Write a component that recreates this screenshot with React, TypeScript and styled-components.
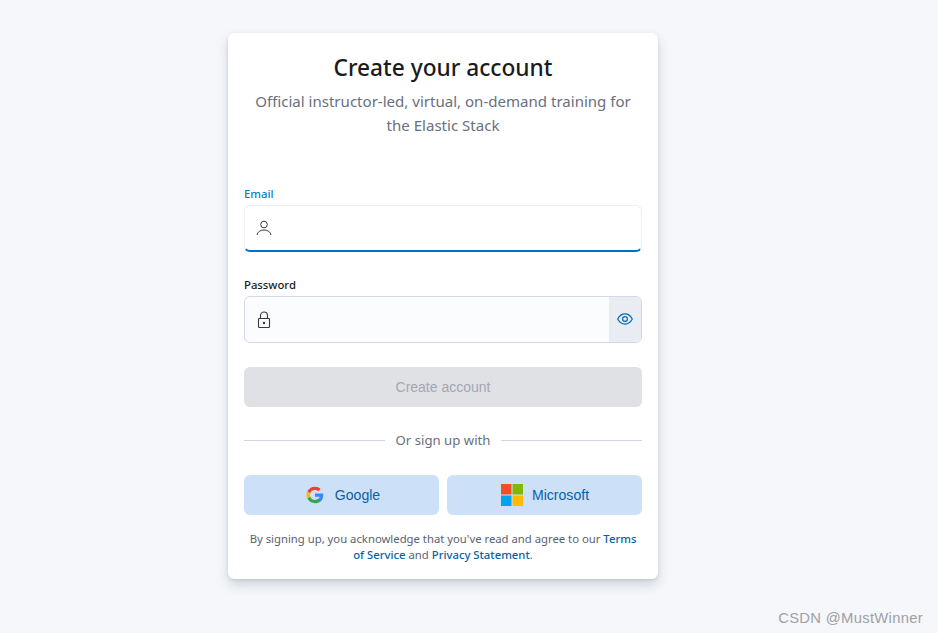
import React from "react";
import styled, { createGlobalStyle } from "styled-components";

const GlobalStyle = createGlobalStyle`
    html, body {
        margin: 0;
        padding: 0;
        height: 100%;
        background: #f5f7fa;
        font-family: "Noto Sans", "Open Sans", sans-serif;
    }
`;

const Page = styled.div`
    width: 938px;
    height: 633px;
    padding: 33px 0 0 228px;
    box-sizing: border-box;
    overflow: hidden;
`;

const Card = styled.div`
    width: 430px;
    height: 546px;
    box-sizing: border-box;
    padding: 16px;
    background: #ffffff;
    border-radius: 6px;
    box-shadow: 0 6px 12px rgba(65, 75, 100, 0.2), 0 1px 3px rgba(65, 75, 100, 0.14);
`;

const Title = styled.h1`
    margin: 3px 0 0;
    font-size: 22.7px;
    line-height: 32px;
    font-weight: 500;
    color: #1a1c21;
    text-align: center;
`;

const Subtitle = styled.p`
    margin: 5px 0 0;
    font-size: 15.05px;
    line-height: 24px;
    color: #69707d;
    text-align: center;
`;

const Field = styled.div<{ $top: number }>`
    margin-top: ${props => props.$top}px;
`;

const Label = styled.label<{ $active?: boolean }>`
    display: block;
    font-size: 11.3px;
    line-height: 16px;
    font-weight: 500;
    margin-bottom: 3px;
    color: ${props => props.$active ? "#0a7fc0" : "#1a1c21"};
`;

const InputWrap = styled.div<{ $active?: boolean }>`
    position: relative;
    display: flex;
    align-items: stretch;
    height: 47px;
    box-sizing: border-box;
    overflow: hidden;
    border-radius: 6px;
    border: 1px solid ${props => props.$active ? "#eeeef5" : "#d3d8e8"};
    background: ${props => props.$active ? "#ffffff" : "#fbfcfd"};
    ${props => props.$active ? "border-bottom: 2px solid #0071c2;" : ""}
`;

const IconSlot = styled.span`
    display: flex;
    align-items: center;
    justify-content: center;
    width: 38px;
    flex: none;
    color: #343741;
`;

const TextInput = styled.input`
    flex: 1;
    min-width: 0;
    border: 0;
    outline: 0;
    background: transparent;
`;

const EyeSlot = styled.span`
    display: flex;
    align-items: center;
    justify-content: center;
    width: 32px;
    padding-bottom: 2px;
    box-sizing: border-box;
    flex: none;
    background: #e9edf3;
    color: #006bb4;
`;

const SubmitButton = styled.button`
    display: block;
    width: 100%;
    height: 40px;
    margin-top: 24px;
    border: 0;
    border-radius: 6px;
    background: #e0e1e5;
    color: #a2a7b3;
    font-family: "Liberation Sans", Arial, sans-serif;
    font-size: 14px;
`;

const Divider = styled.div`
    display: flex;
    align-items: center;
    gap: 11px;
    margin-top: 22px;
    height: 22px;
    font-size: 13.2px;
    color: #69707d;

    &::before, &::after {
        content: "";
        flex: 1;
        height: 1px;
        background: #d0d5e6;
    }
`;

const SocialRow = styled.div`
    display: grid;
    grid-template-columns: 1fr 1fr;
    gap: 8px;
    margin-top: 24px;
`;

const SocialButton = styled.button<{ $gap: number; $inset: number }>`
    display: flex;
    align-items: center;
    justify-content: center;
    gap: ${props => props.$gap}px;
    height: 40px;
    padding: 0 0 0 ${props => props.$inset}px;
    border: 0;
    border-radius: 6px;
    background: #cce1f8;
    color: #0a5fa8;
    font-family: "Liberation Sans", Arial, sans-serif;
    font-size: 14.1px;
`;

const Terms = styled.p`
    margin: 16px 0 0;
    font-size: 11.3px;
    line-height: 16px;
    color: #5a6270;
    text-align: center;
`;

const TermsLink = styled.a`
    color: #0b5fa5;
    font-weight: 500;
    text-decoration: none;
`;

const Watermark = styled.div`
    position: absolute;
    right: 15px;
    top: 609px;
    font-family: "Liberation Sans", Arial, sans-serif;
    font-size: 14.800px;
    line-height: 18px;
    letter-spacing: 0.3px;
    color: #a0a0a3;
`;

const UserIcon = () => (
    <svg width="16" height="16" viewBox="0 0 16 16" fill="none" stroke="currentColor" strokeWidth="1">
        <circle cx="8" cy="4.500" r="3.300" />
        <path d="M1 15c.6-3.200 3.400-5 7-5s6.400 1.800 7 5" />
    </svg>
);

const LockIcon = () => (
    <svg width="14" height="18" viewBox="0 0 14 18" fill="none" stroke="currentColor" strokeWidth="1.100">
        <rect x="1.500" y="7.500" width="11" height="9" rx="0.8" />
        <path d="M3.500 7.500V4.500a3.500 3.500 0 0 1 7 0v3" />
        <circle cx="7" cy="12" r="1.200" fill="currentColor" stroke="none" />
    </svg>
);

const EyeIcon = () => (
    <svg width="16" height="16" viewBox="0 0 16 16" fill="none" stroke="currentColor" strokeWidth="1.200">
        <path d="M.7 8C2.500 4.600 5 2.900 8 2.900s5.500 1.700 7.300 5.100c-1.800 3.400-4.300 5.100-7.300 5.100S2.500 11.400.7 8z" />
        <circle cx="8" cy="8" r="2.400" />
    </svg>
);

const GoogleIcon = () => (
    <svg width="18" height="18" viewBox="0 0 48 48">
        <path fill="#4285F4" d="M46 24.500c0-1.600-.1-3.100-.4-4.500H24v8.600h12.300c-.5 2.800-2.100 5.200-4.500 6.800v5.600h7.300C43.400 36.900 46 31.300 46 24.500z" />
        <path fill="#34A853" d="M24 46c6.100 0 11.300-2 15.100-5.500l-7.300-5.600c-2 1.400-4.700 2.200-7.800 2.200-5.900 0-10.900-4-12.700-9.400H3.700v5.800C7.400 40.900 15.100 46 24 46z" />
        <path fill="#FBBC05" d="M11.300 28.700c-.5-1.400-.7-3-.7-4.700s.3-3.200.7-4.700v-5.800H3.700C2.200 16.500 1.300 20.100 1.300 24s.9 7.500 2.400 10.500l7.600-5.800z" />
        <path fill="#EA4335" d="M24 10.900c3.400 0 6.400 1.200 8.700 3.400l6.500-6.500C35.300 4.200 30.100 2 24 2 15.100 2 7.400 7.100 3.700 13.500l7.600 5.800c1.800-5.400 6.800-8.400 12.700-8.400z" />
    </svg>
);

const MicrosoftIcon = () => (
    <svg width="22" height="22" viewBox="0 0 22 22">
        <rect x="0" y="0" width="10.500" height="10.500" fill="#f25022" />
        <rect x="11.500" y="0" width="10.500" height="10.500" fill="#7fba00" />
        <rect x="0" y="11.500" width="10.500" height="10.500" fill="#00a4ef" />
        <rect x="11.500" y="11.500" width="10.500" height="10.500" fill="#ffb900" />
    </svg>
);

export default function App() {
    return (
        <Page>
            <GlobalStyle />
            <Card>
                <Title>Create your account</Title>
                <Subtitle>Official instructor-led, virtual, on-demand training for the Elastic Stack</Subtitle>
                <Field $top={49}>
                    <Label $active>Email</Label>
                    <InputWrap $active>
                        <IconSlot><UserIcon /></IconSlot>
                        <TextInput />
                    </InputWrap>
                </Field>
                <Field $top={25}>
                    <Label>Password</Label>
                    <InputWrap>
                        <IconSlot><LockIcon /></IconSlot>
                        <TextInput type="password" />
                        <EyeSlot><EyeIcon /></EyeSlot>
                    </InputWrap>
                </Field>
                <SubmitButton disabled>Create account</SubmitButton>
                <Divider>Or sign up with</Divider>
                <SocialRow>
                    <SocialButton $gap={11} $inset={3}><GoogleIcon />Google</SocialButton>
                    <SocialButton $gap={9} $inset={1}><MicrosoftIcon />Microsoft</SocialButton>
                </SocialRow>
                <Terms>
                    By signing up, you acknowledge that you've read and agree to our <TermsLink href="#">Terms of Service</TermsLink> and <TermsLink href="#">Privacy Statement</TermsLink>.
                </Terms>
            </Card>
            <Watermark>CSDN @MustWinner</Watermark>
        </Page>
    );
}
